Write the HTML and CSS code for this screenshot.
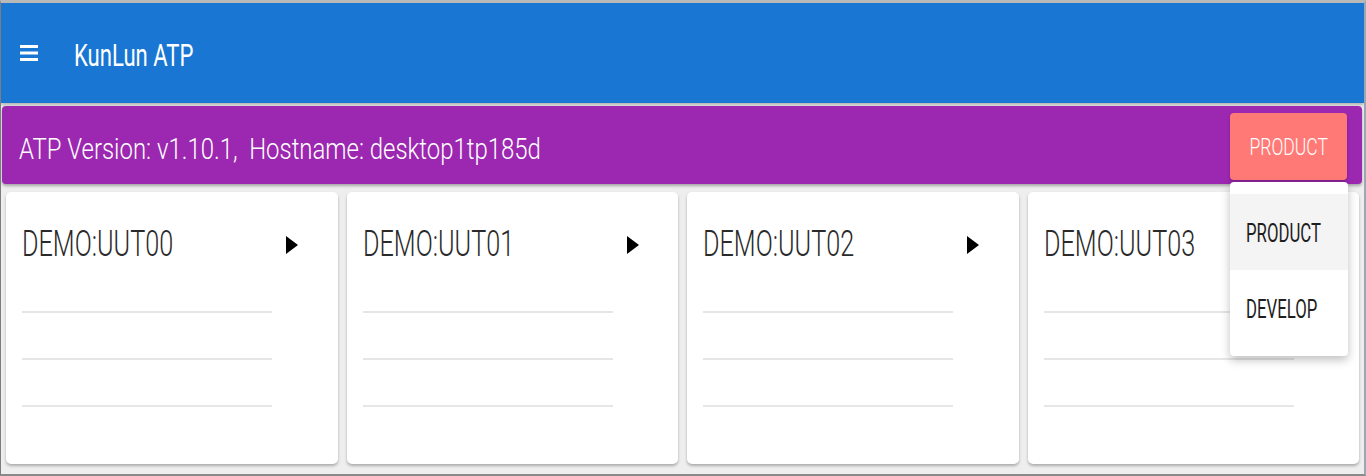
FILE: index.html
```html
<!DOCTYPE html>
<html>
<head>
<meta charset="utf-8">
<link rel="stylesheet" href="styles.css">
</head>
<body>
<div class="frame">
  <header class="appbar">
    <svg class="menu-icon" width="18" height="18" viewBox="0 0 18 18">
      <rect x="0" y="1" width="18" height="3" fill="#fff"/>
      <rect x="0" y="7.5" width="18" height="3" fill="#fff"/>
      <rect x="0" y="14" width="18" height="3" fill="#fff"/>
    </svg>
    <span class="app-title">KunLun ATP</span>
  </header>
  <div class="infobar">
    <span class="info-text">ATP Version: v1.10.1,&nbsp; Hostname: desktop1tp185d</span>
    <button class="mode-btn"><span class="btn-text">PRODUCT</span></button>
  </div>
  <div class="cards">
    <div class="card">
      <div class="card-head"><span class="card-title">DEMO:UUT00</span><svg class="arrow" width="12" height="18" viewBox="0 0 12 18"><path d="M0 0 L12 9 L0 18 Z" fill="#000"/></svg></div>
      <div class="card-lines"><div class="line"></div><div class="line"></div><div class="line"></div></div>
    </div>
    <div class="card">
      <div class="card-head"><span class="card-title">DEMO:UUT01</span><svg class="arrow" width="12" height="18" viewBox="0 0 12 18"><path d="M0 0 L12 9 L0 18 Z" fill="#000"/></svg></div>
      <div class="card-lines"><div class="line"></div><div class="line"></div><div class="line"></div></div>
    </div>
    <div class="card">
      <div class="card-head"><span class="card-title">DEMO:UUT02</span><svg class="arrow" width="12" height="18" viewBox="0 0 12 18"><path d="M0 0 L12 9 L0 18 Z" fill="#000"/></svg></div>
      <div class="card-lines"><div class="line"></div><div class="line"></div><div class="line"></div></div>
    </div>
    <div class="card">
      <div class="card-head"><span class="card-title">DEMO:UUT03</span><svg class="arrow" width="12" height="18" viewBox="0 0 12 18"><path d="M0 0 L12 9 L0 18 Z" fill="#000"/></svg></div>
      <div class="card-lines"><div class="line"></div><div class="line"></div><div class="line"></div></div>
    </div>
  </div>
  <div class="dropdown">
    <div class="dd-item active"><span class="dd-text">PRODUCT</span></div>
    <div class="dd-item"><span class="dd-text">DEVELOP</span></div>
  </div>
</div>
</body>
</html>
```
FILE: styles.css
```css
html, body {
  margin: 0;
  padding: 0;
}
body {
  width: 1366px;
  height: 476px;
  overflow: hidden;
  font-family: Roboto, "Liberation Sans", sans-serif;
  background: #ffffff;
}
.frame {
  position: relative;
  width: 1366px;
  height: 476px;
  box-sizing: border-box;
  border-left: 1px solid #7d7d7d;
  border-right: 2px solid #9aa7b5;
  border-top: 3px solid #b9b9b9;
  border-bottom: 2px solid #8a8a8a;
  background: #eeeeee;
  overflow: hidden;
}
.appbar {
  height: 100px;
  background: #1976d2;
  display: flex;
  align-items: center;
  padding-left: 19px;
  box-shadow: 0 2px 3px rgba(0,0,0,0.25);
}
.menu-icon {
  display: block;
  flex: none;
}
.app-title {
  display: inline-block;
  margin-left: 36px;
  color: #ffffff;
  font-size: 32px;
  font-weight: 400;
  transform: scaleX(0.69);
  transform-origin: left center;
  white-space: nowrap;
  margin-top: 3px;
}
.infobar {
  margin: 3px 2px 0 1px;
  height: 78px;
  background: #9c27b0;
  border-radius: 4px;
  display: flex;
  align-items: center;
  justify-content: space-between;
  padding-left: 17px;
  padding-right: 15px;
  box-shadow: 0 2px 3px rgba(0,0,0,0.3);
}
.info-text {
  display: inline-block;
  color: #ffffff;
  font-size: 29px;
  font-weight: 300;
  transform: scaleX(0.825);
  transform-origin: left center;
  white-space: nowrap;
  margin-top: 8px;
}
.mode-btn {
  width: 117px;
  height: 67px;
  margin-top: 3px;
  border: none;
  border-radius: 4px;
  background: #ff7a76;
  display: flex;
  align-items: center;
  justify-content: center;
  padding: 0;
  box-shadow: 0 2px 3px rgba(0,0,0,0.2);
  font-family: Roboto, "Liberation Sans", sans-serif;
}
.btn-text {
  display: inline-block;
  color: #ffffff;
  font-size: 24px;
  font-weight: 300;
  transform: scaleX(0.73);
  white-space: nowrap;
}
.cards {
  display: flex;
  gap: 9px;
  margin-top: 8px;
  padding-left: 5px;
}
.card {
  width: 331.5px;
  height: 272px;
  flex: none;
  background: #ffffff;
  border-radius: 5px;
  box-shadow: 0 2px 3px rgba(0,0,0,0.28);
  box-sizing: border-box;
  padding: 0 16px;
}
.card-head {
  display: flex;
  align-items: center;
  height: 104px;
  position: relative;
}
.card-title {
  display: inline-block;
  color: #2a2a2a;
  font-size: 36px;
  font-weight: 300;
  transform: scaleX(0.7);
  transform-origin: left center;
  white-space: nowrap;
  margin-top: -1px;
}
.arrow {
  position: absolute;
  left: 264px;
  top: 44px;
}
.card-lines {
  width: 250px;
  margin-top: 15px;
}
.line {
  height: 2px;
  background: #e6e6e6;
  margin-bottom: 45px;
}
.dropdown {
  position: absolute;
  left: 1229px;
  top: 179px;
  width: 118px;
  height: 174px;
  background: #ffffff;
  border-radius: 4px;
  box-shadow: 0 4px 10px rgba(0,0,0,0.25);
  padding-top: 12px;
  box-sizing: border-box;
}
.dd-item {
  height: 76px;
  display: flex;
  align-items: center;
  padding-left: 16px;
}
.dd-item.active {
  background: #f4f4f4;
}
.dd-text {
  display: inline-block;
  color: #1e1e1e;
  font-size: 25px;
  font-weight: 400;
  transform: scaleX(0.67);
  transform-origin: left center;
  white-space: nowrap;
  margin-top: 3px;
}
```
